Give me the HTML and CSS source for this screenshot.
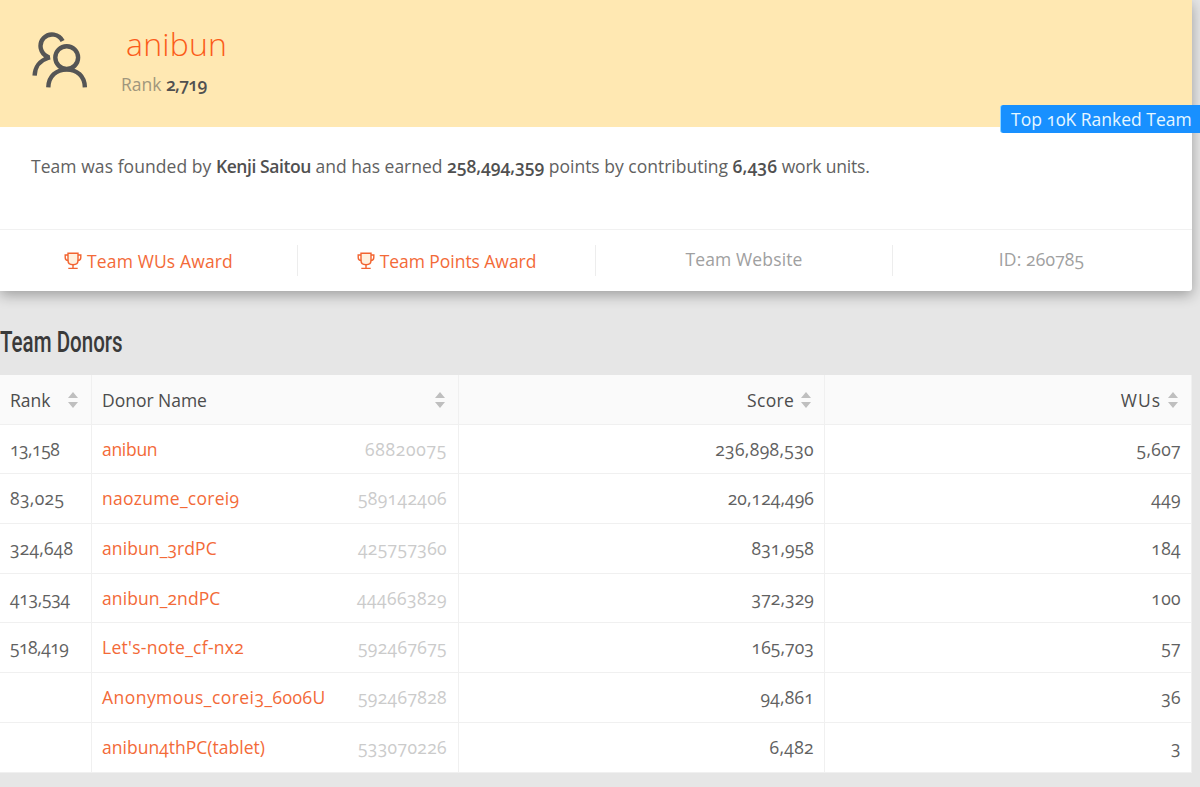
FILE: index.html
```html
<!DOCTYPE html>
<html lang="en">
<head>
<meta charset="utf-8">
<title>anibun - Team</title>
<link rel="stylesheet" href="styles.css">
</head>
<body>
<section class="card">
  <header class="card-head">
    <svg class="team-icon" viewBox="0 0 56 56" fill="none" stroke="#555" stroke-width="4.4">
      <circle cx="34.7" cy="25.6" r="11.4"/>
      <path d="M16.3 55.4C16.6 44 24.5 37.6 34.7 37.6S52.6 44 52.9 55.4"/>
      <path d="M30.600 9A11.6 11.6 0 1 0 15.8 24.8L16 26C7.5 28.5 2.9 35.500 2.600 43.600"/>
    </svg>
    <div class="team-title">
      <h1>anibun</h1>
      <p class="team-rank"><span>Rank</span> <b>2,719</b></p>
    </div>
    <div class="ribbon">Top 10K Ranked Team</div>
  </header>
  <div class="summary"><span class="s1">Team was founded by</span> <b class="tight">Kenji Saitou</b> <span class="s2">and has earned</span> <b class="points">258,494,359</b> <span class="s2">points by contributing</span> <b class="units">6,436</b> <span class="end">work units.</span></div>
  <ul class="actions">
    <li><a class="award"><svg class="trophy" viewBox="0 0 18 18"><path d="M4 1.200H14V8.500C14 11.200 11.800 12.700 9 12.700S4 11.200 4 8.500Z"/><path d="M4 3H1.200V5.400C1.200 7.400 2.500 8.500 4.300 8.500M14 3H16.800V5.400C16.800 7.400 15.500 8.500 13.700 8.500M9 12.700V16.300M4.300 16.400H13.700"/></svg><span>Team WUs Award</span></a></li>
    <li><a class="award"><svg class="trophy" viewBox="0 0 18 18"><path d="M4 1.200H14V8.500C14 11.200 11.800 12.700 9 12.700S4 11.200 4 8.500Z"/><path d="M4 3H1.200V5.400C1.200 7.400 2.500 8.500 4.300 8.500M14 3H16.800V5.400C16.800 7.400 15.500 8.500 13.700 8.500M9 12.700V16.300M4.300 16.400H13.700"/></svg><span class="even">Team Points Award</span></a></li>
    <li><a>Team Website</a></li>
    <li><span>ID: 260785</span></li>
  </ul>
</section>

<h2><span>Team Donors</span></h2>

<table class="donors">
  <colgroup><col class="c-rank"><col class="c-name"><col class="c-score"><col class="c-wus"></colgroup>
  <thead>
    <tr>
      <th><div class="cell"><span>Rank</span><svg class="sorter" viewBox="0 0 10 16"><path d="M5 0L10 6H0ZM0 10H10L5 16Z"/></svg></div></th>
      <th><div class="cell"><span>Donor Name</span><svg class="sorter" viewBox="0 0 10 16"><path d="M5 0L10 6H0ZM0 10H10L5 16Z"/></svg></div></th>
      <th><div class="cell right"><span class="w3">Score</span><svg class="sorter" viewBox="0 0 10 16"><path d="M5 0L10 6H0ZM0 10H10L5 16Z"/></svg></div></th>
      <th><div class="cell right"><span class="w9">WUs</span><svg class="sorter" viewBox="0 0 10 16"><path d="M5 0L10 6H0ZM0 10H10L5 16Z"/></svg></div></th>
    </tr>
  </thead>
  <tbody>
    <tr><td class="narrow">13,158</td><td><div class="cell"><a class="wn">anibun</a><i class="w7">68820075</i></div></td><td>236,898,530</td><td>5,607</td></tr>
    <tr><td>83,025</td><td><div class="cell"><a class="w3">naozume_corei9</a><i>589142406</i></div></td><td class="w1">20,124,496</td><td>449</td></tr>
    <tr><td class="w2">324,648</td><td><div class="cell"><a class="w1">anibun_3rdPC</a><i>425757360</i></div></td><td class="w1">831,958</td><td>184</td></tr>
    <tr><td class="wn">413,534</td><td><div class="cell"><a class="w1">anibun_2ndPC</a><i class="w5">444663829</i></div></td><td class="w1">372,329</td><td>100</td></tr>
    <tr><td class="narrow">518,419</td><td><div class="cell"><a class="w3">Let's-note_cf-nx2</a><i>592467675</i></div></td><td class="w1">165,703</td><td>57</td></tr>
    <tr><td></td><td><div class="cell"><a class="w5">Anonymous_corei3_6006U</a><i>592467828</i></div></td><td class="w2">94,861</td><td>36</td></tr>
    <tr><td></td><td><div class="cell"><a class="w0">anibun4thPC(tablet)</a><i>533070226</i></div></td><td>6,482</td><td>3</td></tr>
  </tbody>
</table>
</body>
</html>
```

FILE: styles.css
```css
* { box-sizing: border-box; }
body {
  margin: 0;
  width: 1200px;
  height: 787px;
  overflow: hidden;
  background: #e6e6e6;
  color: #616161;
  font: 400 17.5px/24px "Open Sans", "Noto Sans", sans-serif;
  font-variant-numeric: oldstyle-nums;
}
h1, h2, p, ul { margin: 0; padding: 0; }
b { font-weight: 600; color: #505050; }
i { font-style: normal; }

.card {
  width: 1192px;
  height: 291px;
  background: #fff;
  border-radius: 0 0 3px 0;
  box-shadow: 0 4px 14px rgba(0, 0, 0, .32);
}
.card-head {
  position: relative;
  display: flex;
  height: 127px;
  padding: 32px 0 0 32px;
  background: #ffe8b2;
}
.team-icon { width: 56px; height: 56px; }
.team-title { padding-left: 33px; margin-top: -11px; }
.team-title h1 {
  padding-left: 5px;
  color: #fb5c1a;
  font-size: 32px;
  font-weight: 350;
  line-height: 46px;
  letter-spacing: .2px;
}
.team-rank { margin-top: 5px; }
.team-rank span { color: #a0967c; }
.team-rank b { letter-spacing: -.7px; }
.ribbon {
  position: absolute;
  left: 1000px;
  top: 105px;
  width: 200px;
  height: 28px;
  padding-left: 10px;
  border: 1px solid #91d5ff;
  border-width: 0 0 0 1px;
  border-radius: 3px 0 0 3px;
  background: #1890ff;
  color: #e6f7ff;
  line-height: 28px;
  white-space: nowrap;
}
.summary { height: 102px; padding: 27px 31px; white-space: nowrap; }
.summary .s1 { letter-spacing: .06px; }
.summary .s2 { letter-spacing: 0; }
.summary .tight { letter-spacing: -.42px; }
.summary .points { letter-spacing: -.07px; }
.summary .units { letter-spacing: .1px; }
.summary .end { letter-spacing: -.2px; }

.actions {
  display: grid;
  grid-template-columns: 298px 298px 297px 299px;
  height: 62px;
  padding: 15px 0;
  border-top: 1px solid #f1f1f1;
  list-style: none;
  color: #a0a0a0;
}
.actions li {
  display: flex;
  justify-content: center;
  align-items: center;
  padding-bottom: 3px;
  border-right: 1px solid #ededed;
  letter-spacing: .14px;
}
.actions li:last-child { padding-right: 2px; border: 0; }
.award { display: flex; align-items: center; gap: 5px; padding-top: 4px; color: #f36a38; }
.award .even { letter-spacing: -.05px; }
.trophy { width: 18px; height: 18px; fill: none; stroke: #f26430; stroke-width: 1.4; }
.trophy path:first-child { fill: #fff1df; }

h2 {
  height: 84px;
  padding-top: 30px;
  color: #3a3a3a;
  font: 500 30px/42px Roboto, sans-serif;
}
h2 span { display: inline-block; transform: scaleX(.685); transform-origin: 0 50%; white-space: nowrap; }

.donors { width: 1192px; table-layout: fixed; border-collapse: separate; border-spacing: 0; background: #fff; }
.c-rank { width: 92px; }
.c-name { width: 367px; }
.c-score { width: 366px; }
.c-wus { width: 367px; }
.donors th, .donors td {
  height: 49.7px;
  padding: 0 11px 1px 10px;
  border: 1px solid #f0f0f0;
  border-width: 0 1px 1px 0;
  text-align: left;
  letter-spacing: .36px;
}
.donors th { padding: 1px 11px 0 10px; background: #fafafa; color: #4c4c4c; font-weight: 400; letter-spacing: -.02px; }
.donors td:nth-child(n+3) { text-align: right; padding-right: 10px; }
.cell { display: flex; justify-content: space-between; align-items: center; }
.cell.right { justify-content: flex-end; gap: 7px; }
.cell a { color: #f36a38; }
.cell i { color: #cbcbcb; }
.sorter { width: 10px; height: 16px; margin-right: 2px; fill: #bfbfbf; }
.donors .narrow { letter-spacing: -.5px; }
.donors .wn { letter-spacing: -.3px; }
.w0 { letter-spacing: .02px; }
.donors .w1 { letter-spacing: .1px; }
.donors .w2 { letter-spacing: .2px; }
.w3 { letter-spacing: .28px; }
.w5 { letter-spacing: .46px; }
.w7 { letter-spacing: .7px; }
.w9 { letter-spacing: 1px; }
```
